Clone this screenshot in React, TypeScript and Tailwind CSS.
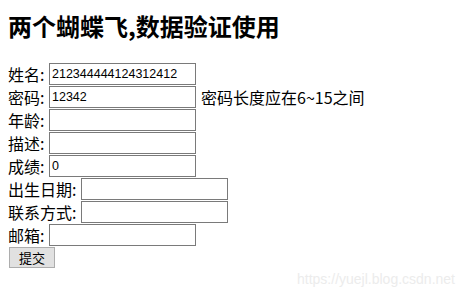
import React from "react";

const cjk = { fontFamily: '"Noto Sans CJK SC", "Noto Sans", sans-serif' };

function Row({ label, wide, value, hint }: { label: string; wide?: boolean; value?: string; hint?: string }) {
  return (
    <div className="flex h-[23px] items-start">
      <span className={`${wide ? "w-[73px]" : "w-[41px]"} h-[22px] flex items-center text-[16px] leading-[22px] text-black shrink-0 whitespace-nowrap`}>
        {label}
      </span>
      <div className="w-[147px] h-[22px] border border-[#7a7a7a] bg-white flex items-center pl-[2px] shrink-0">
        <span className="text-[12.5px] leading-none text-black" style={{ fontFamily: '"Liberation Sans", Arial, sans-serif' }}>
          {value}
        </span>
      </div>
      {hint && (
        <span className="ml-[5px] h-[22px] flex items-center text-[16px] leading-[22px] text-black whitespace-nowrap">{hint}</span>
      )}
    </div>
  );
}

export default function App() {
  return (
    <div className="relative w-[464px] h-[299px] bg-white overflow-hidden pl-[8px]" style={cjk}>
      <h2 className="pt-[14px] text-[24px] leading-[24px] font-bold text-black whitespace-nowrap">两个蝴蝶飞,数据验证使用</h2>
      <div className="mt-[25px] flex flex-col">
        <Row label="姓名:" value="212344444124312412" />
        <Row label="密码:" value="12342" hint="密码长度应在6~15之间" />
        <Row label="年龄:" />
        <Row label="描述:" />
        <Row label="成绩:" value="0" />
        <Row label="出生日期:" wide />
        <Row label="联系方式:" wide />
        <Row label="邮箱:" />
        <div className="flex">
          <button className="ml-[1px] w-[46px] h-[21px] bg-[#e1e1e1] border border-[#adadad] text-[13px] leading-none text-black flex items-center justify-center">
            提交
          </button>
        </div>
      </div>
      <div
        className="absolute right-[9px] top-[271px] text-[14px] leading-[16px] text-[#ececec] whitespace-nowrap"
        style={{ fontFamily: '"Liberation Sans", Arial, sans-serif' }}
      >
        https://yuejl.blog.csdn.net
      </div>
    </div>
  );
}
